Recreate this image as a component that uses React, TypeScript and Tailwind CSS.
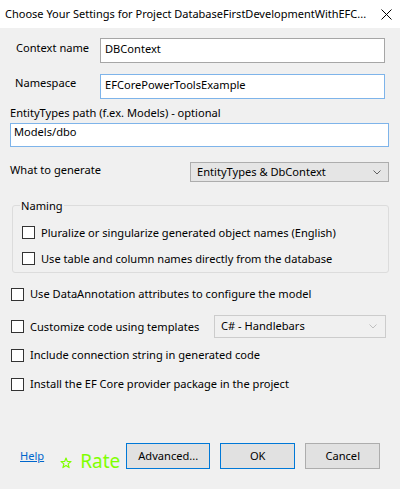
import React from "react";

function CheckBox({ label }: { label: string }) {
  return (
    <label className="flex items-center gap-[6px] h-[14px]">
      <span className="h-[13px] w-[13px] shrink-0 border border-[#333333] bg-white" />
      <span className="leading-none">{label}</span>
    </label>
  );
}

function Chevron({ color }: { color: string }) {
  return (
    <svg width="8" height="5" viewBox="0 0 8 5" fill="none">
      <path d="M0.5 0.5 L4 4 L7.5 0.5" stroke={color} strokeWidth="1" />
    </svg>
  );
}

export default function App() {
  return (
    <div className="w-[400px] h-[489px] bg-[#f0f0f0] text-[11.1px] text-black font-['Noto_Sans',sans-serif] flex flex-col">
      <div className="h-[28px] bg-white flex items-center justify-between pl-[5px] pr-[8px]">
        <span className="whitespace-nowrap text-[11px]">Choose Your Settings for Project DatabaseFirstDevelopmentWithEFC...</span>
        <svg width="11" height="11" viewBox="0 0 11 11" className="shrink-0">
          <path d="M0.5 0.5 L10.5 10.5 M10.5 0.5 L0.5 10.5" stroke="#000" strokeWidth="1" />
        </svg>
      </div>

      <div className="flex items-start mt-[10px]">
        <span className="ml-[16px] w-[84px] pt-[2px]">Context name</span>
        <div className="w-[285px] h-[25px] border border-[#a6a6a6] bg-white px-[4px] pt-[2px]">DBContext</div>
      </div>

      <div className="flex items-start mt-[11px]">
        <span className="ml-[15px] w-[85px] pt-[1px]">Namespace</span>
        <div className="w-[285px] h-[25px] border border-[#7eb4ea] bg-white px-[4px] pt-[2px]">EFCorePowerToolsExample</div>
      </div>

      <div className="ml-[10px] mt-[5px] h-[19px] pt-[1px]">EntityTypes path (f.ex. Models) - optional</div>
      <div className="ml-[10px] w-[379px] h-[24px] border border-[#7eb4ea] bg-white px-[3px]">Models/dbo</div>

      <div className="flex items-start mt-[15px]">
        <span className="ml-[10px] w-[180px]">What to generate</span>
        <div className="w-[199px] h-[20px] border border-[#adadad] bg-[#e5e5e5] flex items-center justify-between pl-[6px] pr-[7px]">
          <span>EntityTypes &amp; DbContext</span>
          <Chevron color="#606060" />
        </div>
      </div>

      <fieldset className="ml-[12px] mt-[18px] w-[377px] h-[73px] border border-[#dcdcdc] rounded-[3px] px-[7px]">
        <legend className="px-[1px] leading-none">Naming</legend>
        <div className="flex flex-col gap-[12px] pl-[2px] mt-[14px]">
          <CheckBox label="Pluralize or singularize generated object names (English)" />
          <CheckBox label="Use table and column names directly from the database" />
        </div>
      </fieldset>

      <div className="ml-[11px] mt-[14px] flex flex-col">
        <CheckBox label="Use DataAnnotation attributes to configure the model" />
        <div className="flex items-center mt-[14px] h-[23px]">
          <div className="w-[203px]">
            <CheckBox label="Customize code using templates" />
          </div>
          <div className="w-[172px] h-[23px] border border-[#cccccc] bg-[#f0f0f0] flex items-center justify-between pl-[6px] pr-[8px]">
            <span>C# - Handlebars</span>
            <Chevron color="#bfbfbf" />
          </div>
        </div>
        <div className="mt-[10px]">
          <CheckBox label="Include connection string in generated code" />
        </div>
        <div className="mt-[15px]">
          <CheckBox label="Install the EF Core provider package in the project" />
        </div>
      </div>

      <div className="flex items-center mt-[52px] h-[26px]">
        <a className="ml-[20px] text-[#0066cc] underline">Help</a>
        <span className="ml-[16px] mt-[10px] flex items-center text-[#80ff00]">
          <svg width="12" height="12" viewBox="0 0 12 12" fill="none" className="mt-[3px]">
            <path
              d="M6 1 L7.3 4.4 L11 4.6 L8.1 6.9 L9.1 10.6 L6 8.5 L2.9 10.6 L3.9 6.9 L1 4.6 L4.7 4.4 Z"
              stroke="#80ff00"
              strokeWidth="1.2"
              strokeLinejoin="round"
            />
          </svg>
          <span className="ml-[8px] text-[19px] leading-none">Rate</span>
        </span>
        <button className="ml-[6px] w-[84px] h-[26px] border border-[#0078d7] bg-[#e1e1e1]">Advanced...</button>
        <button className="ml-[10px] w-[75px] h-[26px] border border-[#0078d7] bg-[#e1e1e1]">OK</button>
        <button className="ml-[10px] w-[75px] h-[26px] border border-[#adadad] bg-[#e1e1e1]">Cancel</button>
      </div>
    </div>
  );
}
